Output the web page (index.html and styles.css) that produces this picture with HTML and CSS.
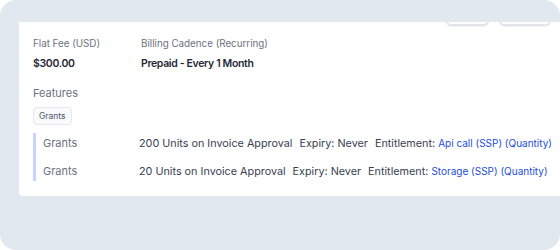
FILE: index.html
```html
<!DOCTYPE html>
<html lang="en">
<head>
    <meta charset="UTF-8">
    <meta name="viewport" content="width=device-width, initial-scale=1.0">
    <title>Plan charges</title>
    <link rel="stylesheet" href="styles.css">
</head>
<body>
    <div class="frame">
        <div class="card">
            <div class="toolbar">
                <button class="btn btn-small"></button>
                <button class="btn btn-wide"></button>
            </div>
            <div class="content">
                <div class="summary">
                    <div class="field">
                        <div class="label">Flat Fee (USD)</div>
                        <div class="value">$300.00</div>
                    </div>
                    <div class="field">
                        <div class="label">Billing Cadence (Recurring)</div>
                        <div class="value">Prepaid - Every 1 Month</div>
                    </div>
                </div>
                <div class="features-title">Features</div>
                <span class="chip">Grants</span>
                <div class="grants">
                    <div class="grant-row">
                        <span class="grant-name">Grants</span>
                        <span class="grant-detail">200 Units on Invoice Approval</span>
                        <span class="grant-detail">Expiry: Never</span>
                        <span class="grant-detail">Entitlement: <a class="link" href="#">Api call (SSP) (Quantity)</a></span>
                    </div>
                    <div class="grant-row">
                        <span class="grant-name">Grants</span>
                        <span class="grant-detail">20 Units on Invoice Approval</span>
                        <span class="grant-detail">Expiry: Never</span>
                        <span class="grant-detail">Entitlement: <a class="link" href="#">Storage (SSP) (Quantity)</a></span>
                    </div>
                </div>
            </div>
        </div>
    </div>
</body>
</html>
```

FILE: styles.css
```css
body {
    margin: 0;
    background-color: #fff;
    font-family: Inter, "Noto Sans", sans-serif;
}
.frame {
    width: 560px;
    height: 250px;
    box-sizing: border-box;
    padding: 22px 0 0 19px;
    background-color: #e2e8f0;
    border-radius: 16px;
    overflow: hidden;
}
.card {
    height: 174px;
    background-color: #fff;
    border-radius: 0 0 0 4px;
    overflow: hidden;
}
.toolbar {
    display: flex;
    justify-content: flex-end;
    gap: 10px;
    margin-top: -26px;
    padding-right: 9px;
}
.btn {
    height: 29px;
    background-color: #fff;
    border: 1px solid #e2e8f0;
    border-radius: 6px;
    box-shadow: 0 1px 2px rgba(15, 23, 42, 0.18);
}
.btn-small {
    width: 43px;
}
.btn-wide {
    width: 52px;
}
.content {
    padding: 12px 0 0 14px;
}
.summary {
    display: flex;
}
.field:first-child {
    width: 108px;
}
.label {
    font-size: 9.8px;
    color: #6b7280;
    line-height: 14px;
}
.value {
    margin-top: 5px;
    font-size: 10.5px;
    font-weight: 600;
    letter-spacing: -0.35px;
    color: #1f2937;
    line-height: 16px;
}
.features-title {
    margin-top: 13px;
    font-size: 11px;
    color: #6b7280;
    line-height: 16px;
}
.chip {
    display: inline-block;
    margin-top: 6px;
    padding: 0 5px;
    font-size: 8.5px;
    line-height: 16px;
    color: #4b5563;
    background-color: #f8fafc;
    border: 1px solid #e5e7eb;
    border-radius: 4px;
}
.grants {
    display: flex;
    flex-direction: column;
    gap: 8px;
    margin-top: 8px;
    border-left: 3px solid #c7d2fe;
    padding-left: 7px;
}
.grant-row {
    display: flex;
    align-items: center;
    gap: 7px;
    height: 20px;
    font-size: 10.8px;
    white-space: nowrap;
}
.grant-name {
    flex-shrink: 0;
    width: 89px;
    font-size: 11px;
    color: #6b7280;
}
.grant-detail {
    flex-shrink: 0;
    color: #374151;
}
.link {
    font-size: 10px;
    color: #1d4ed8;
    text-decoration: none;
}
```
